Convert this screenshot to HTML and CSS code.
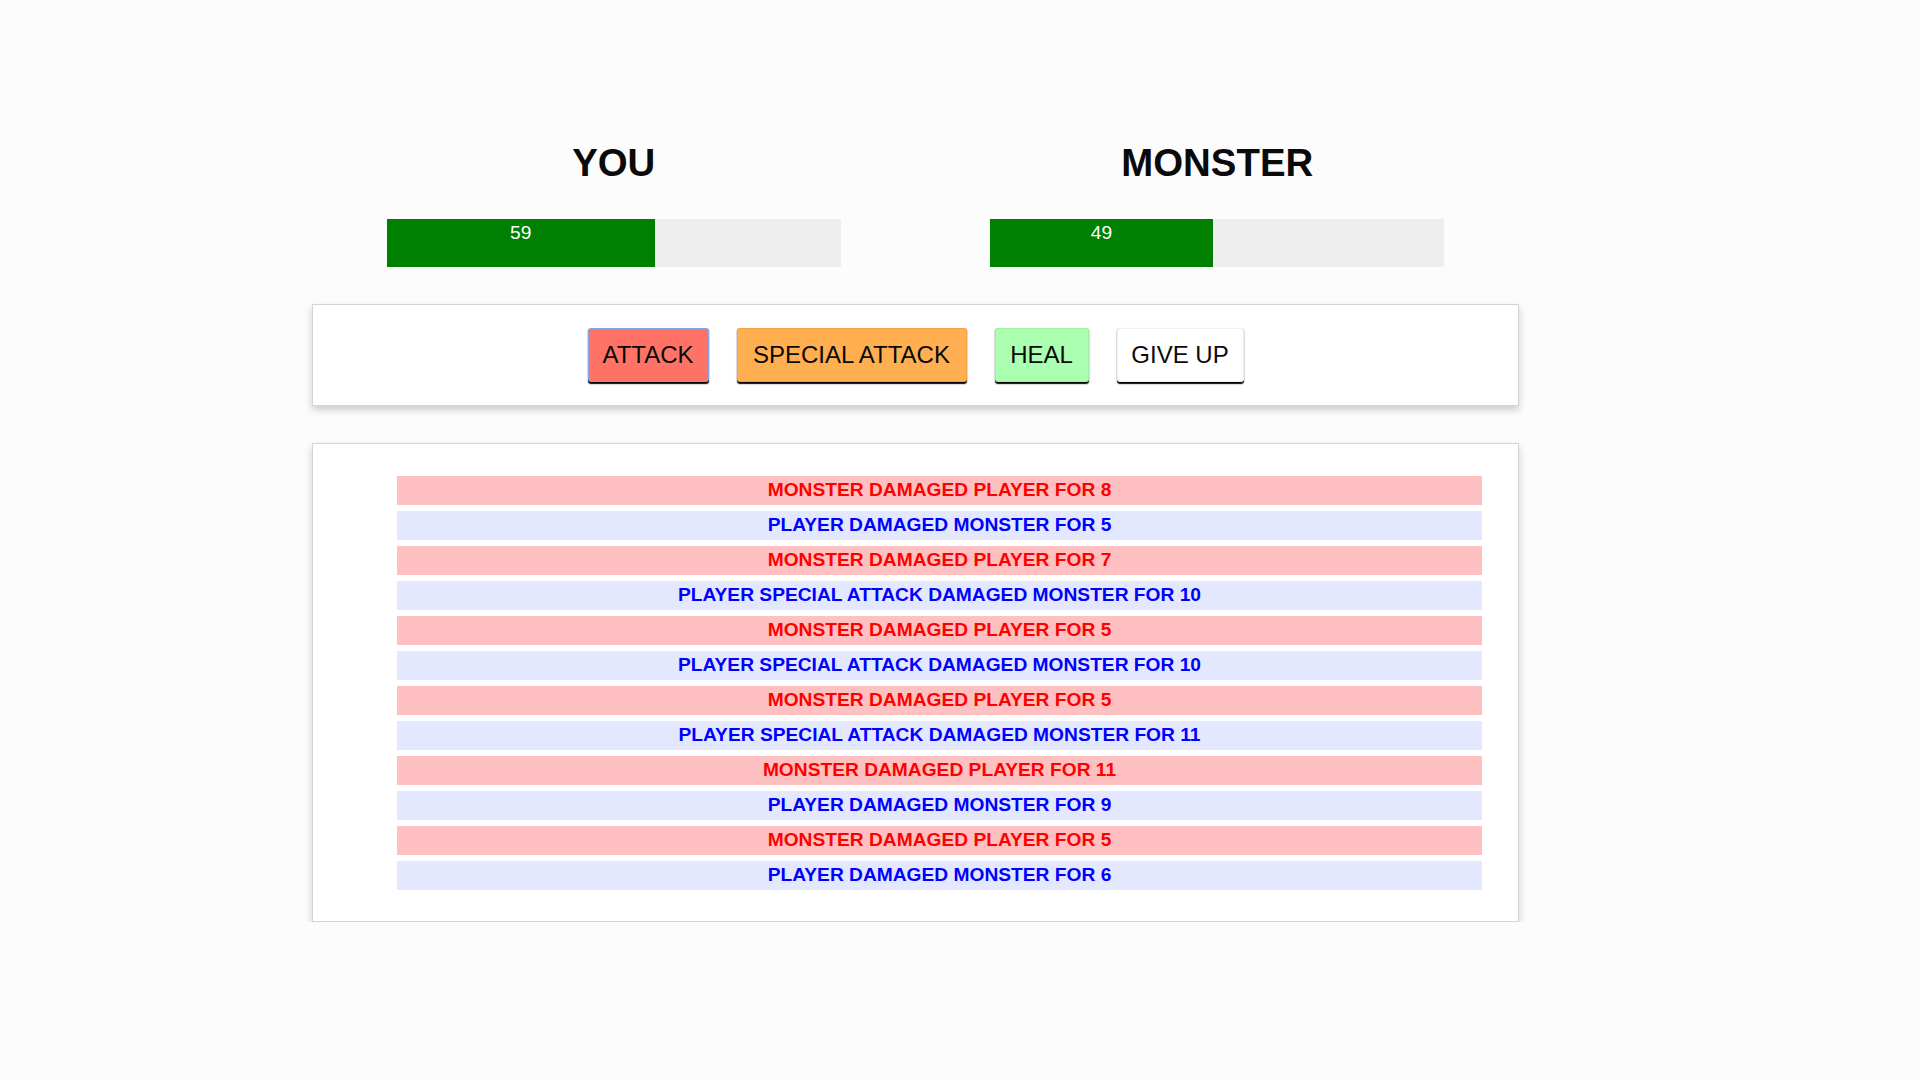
FILE: index.html
```html
<!DOCTYPE html>
<html lang="en">
<head>
<meta charset="utf-8">
<title>Monster Slayer</title>
<link rel="stylesheet" href="styles.css">
</head>
<body>
<div class="app">
  <section class="stats">
    <div class="fighter">
      <h1 class="name">YOU</h1>
      <div class="healthbar"><div class="healthbar-value" style="width: 59%">59</div></div>
    </div>
    <div class="fighter">
      <h1 class="name">MONSTER</h1>
      <div class="healthbar"><div class="healthbar-value" style="width: 49%">49</div></div>
    </div>
  </section>
  <section class="controls">
    <button class="btn btn-attack">ATTACK</button>
    <button class="btn btn-special">SPECIAL ATTACK</button>
    <button class="btn btn-heal">HEAL</button>
    <button class="btn btn-giveup">GIVE UP</button>
  </section>
  <section class="log">
    <ul class="log-list">
      <li class="monster-turn">MONSTER DAMAGED PLAYER FOR 8</li>
      <li class="player-turn">PLAYER DAMAGED MONSTER FOR 5</li>
      <li class="monster-turn">MONSTER DAMAGED PLAYER FOR 7</li>
      <li class="player-turn">PLAYER SPECIAL ATTACK DAMAGED MONSTER FOR 10</li>
      <li class="monster-turn">MONSTER DAMAGED PLAYER FOR 5</li>
      <li class="player-turn">PLAYER SPECIAL ATTACK DAMAGED MONSTER FOR 10</li>
      <li class="monster-turn">MONSTER DAMAGED PLAYER FOR 5</li>
      <li class="player-turn">PLAYER SPECIAL ATTACK DAMAGED MONSTER FOR 11</li>
      <li class="monster-turn">MONSTER DAMAGED PLAYER FOR 11</li>
      <li class="player-turn">PLAYER DAMAGED MONSTER FOR 9</li>
      <li class="monster-turn">MONSTER DAMAGED PLAYER FOR 5</li>
      <li class="player-turn">PLAYER DAMAGED MONSTER FOR 6</li>
    </ul>
  </section>
</div>
</body>
</html>
```

FILE: styles.css
```css
* {
  box-sizing: border-box;
}

html, body {
  margin: 0;
  padding: 0;
  background: #fcfcfc;
  font-family: "Liberation Sans", Arial, sans-serif;
  color: #0a0a0a;
}

.app {
  width: 1207px;
  margin-left: 312px;
  padding-top: 141px;
}

.stats {
  display: grid;
  grid-template-columns: 1fr 1fr;
}

.fighter {
  display: flex;
  flex-direction: column;
  align-items: center;
}

.name {
  margin: 0;
  font-size: 38.4px;
  line-height: 44px;
  font-weight: bold;
  color: #0a0a0a;
}

.healthbar {
  width: 454px;
  height: 48px;
  margin-top: 34px;
  background: #eeeeee;
}

.healthbar-value {
  height: 100%;
  background: #008000;
  color: #ffffff;
  font-size: 19.2px;
  line-height: 27px;
  text-align: center;
}

.controls {
  margin-top: 37px;
  height: 102px;
  background: #ffffff;
  border: 1px solid #d4d4d4;
  box-shadow: 0 3.6px 7.2px #cccccc;
  display: flex;
  justify-content: center;
  align-items: center;
  gap: 28px;
}

.btn {
  font-family: "Liberation Sans", Arial, sans-serif;
  font-size: 24px;
  line-height: 28px;
  height: 54px;
  padding: 12px 0;
  text-align: center;
  border: 1px solid rgba(0, 0, 0, 0.06);
  border-radius: 3px;
  color: #0a0a0a;
  box-shadow: 0 1.2px 1.2px #000000;
  cursor: pointer;
}

.btn-attack {
  width: 121px;
  background: #ff7367;
  border-color: #7ea4ea;
}

.btn-special {
  width: 230px;
  background: #ffaf4f;
}

.btn-heal {
  width: 94px;
  background: #aaffb0;
}

.btn-giveup {
  width: 127px;
  background: #ffffff;
}

.log {
  margin-top: 37px;
  background: #ffffff;
  border: 1px solid #d4d4d4;
  box-shadow: 0 3.6px 7.2px #cccccc;
  padding: 32px 36px 31px 84px;
}

.log-list {
  list-style: none;
  margin: 0;
  padding: 0;
  display: flex;
  flex-direction: column;
  gap: 6px;
}

.log-list li {
  height: 29px;
  line-height: 28px;
  text-align: center;
  font-weight: bold;
  font-size: 19.2px;
}

.player-turn {
  color: #0000ff;
  background: #e4e8ff;
}

.monster-turn {
  color: #ff0000;
  background: #ffc0c1;
}
```
